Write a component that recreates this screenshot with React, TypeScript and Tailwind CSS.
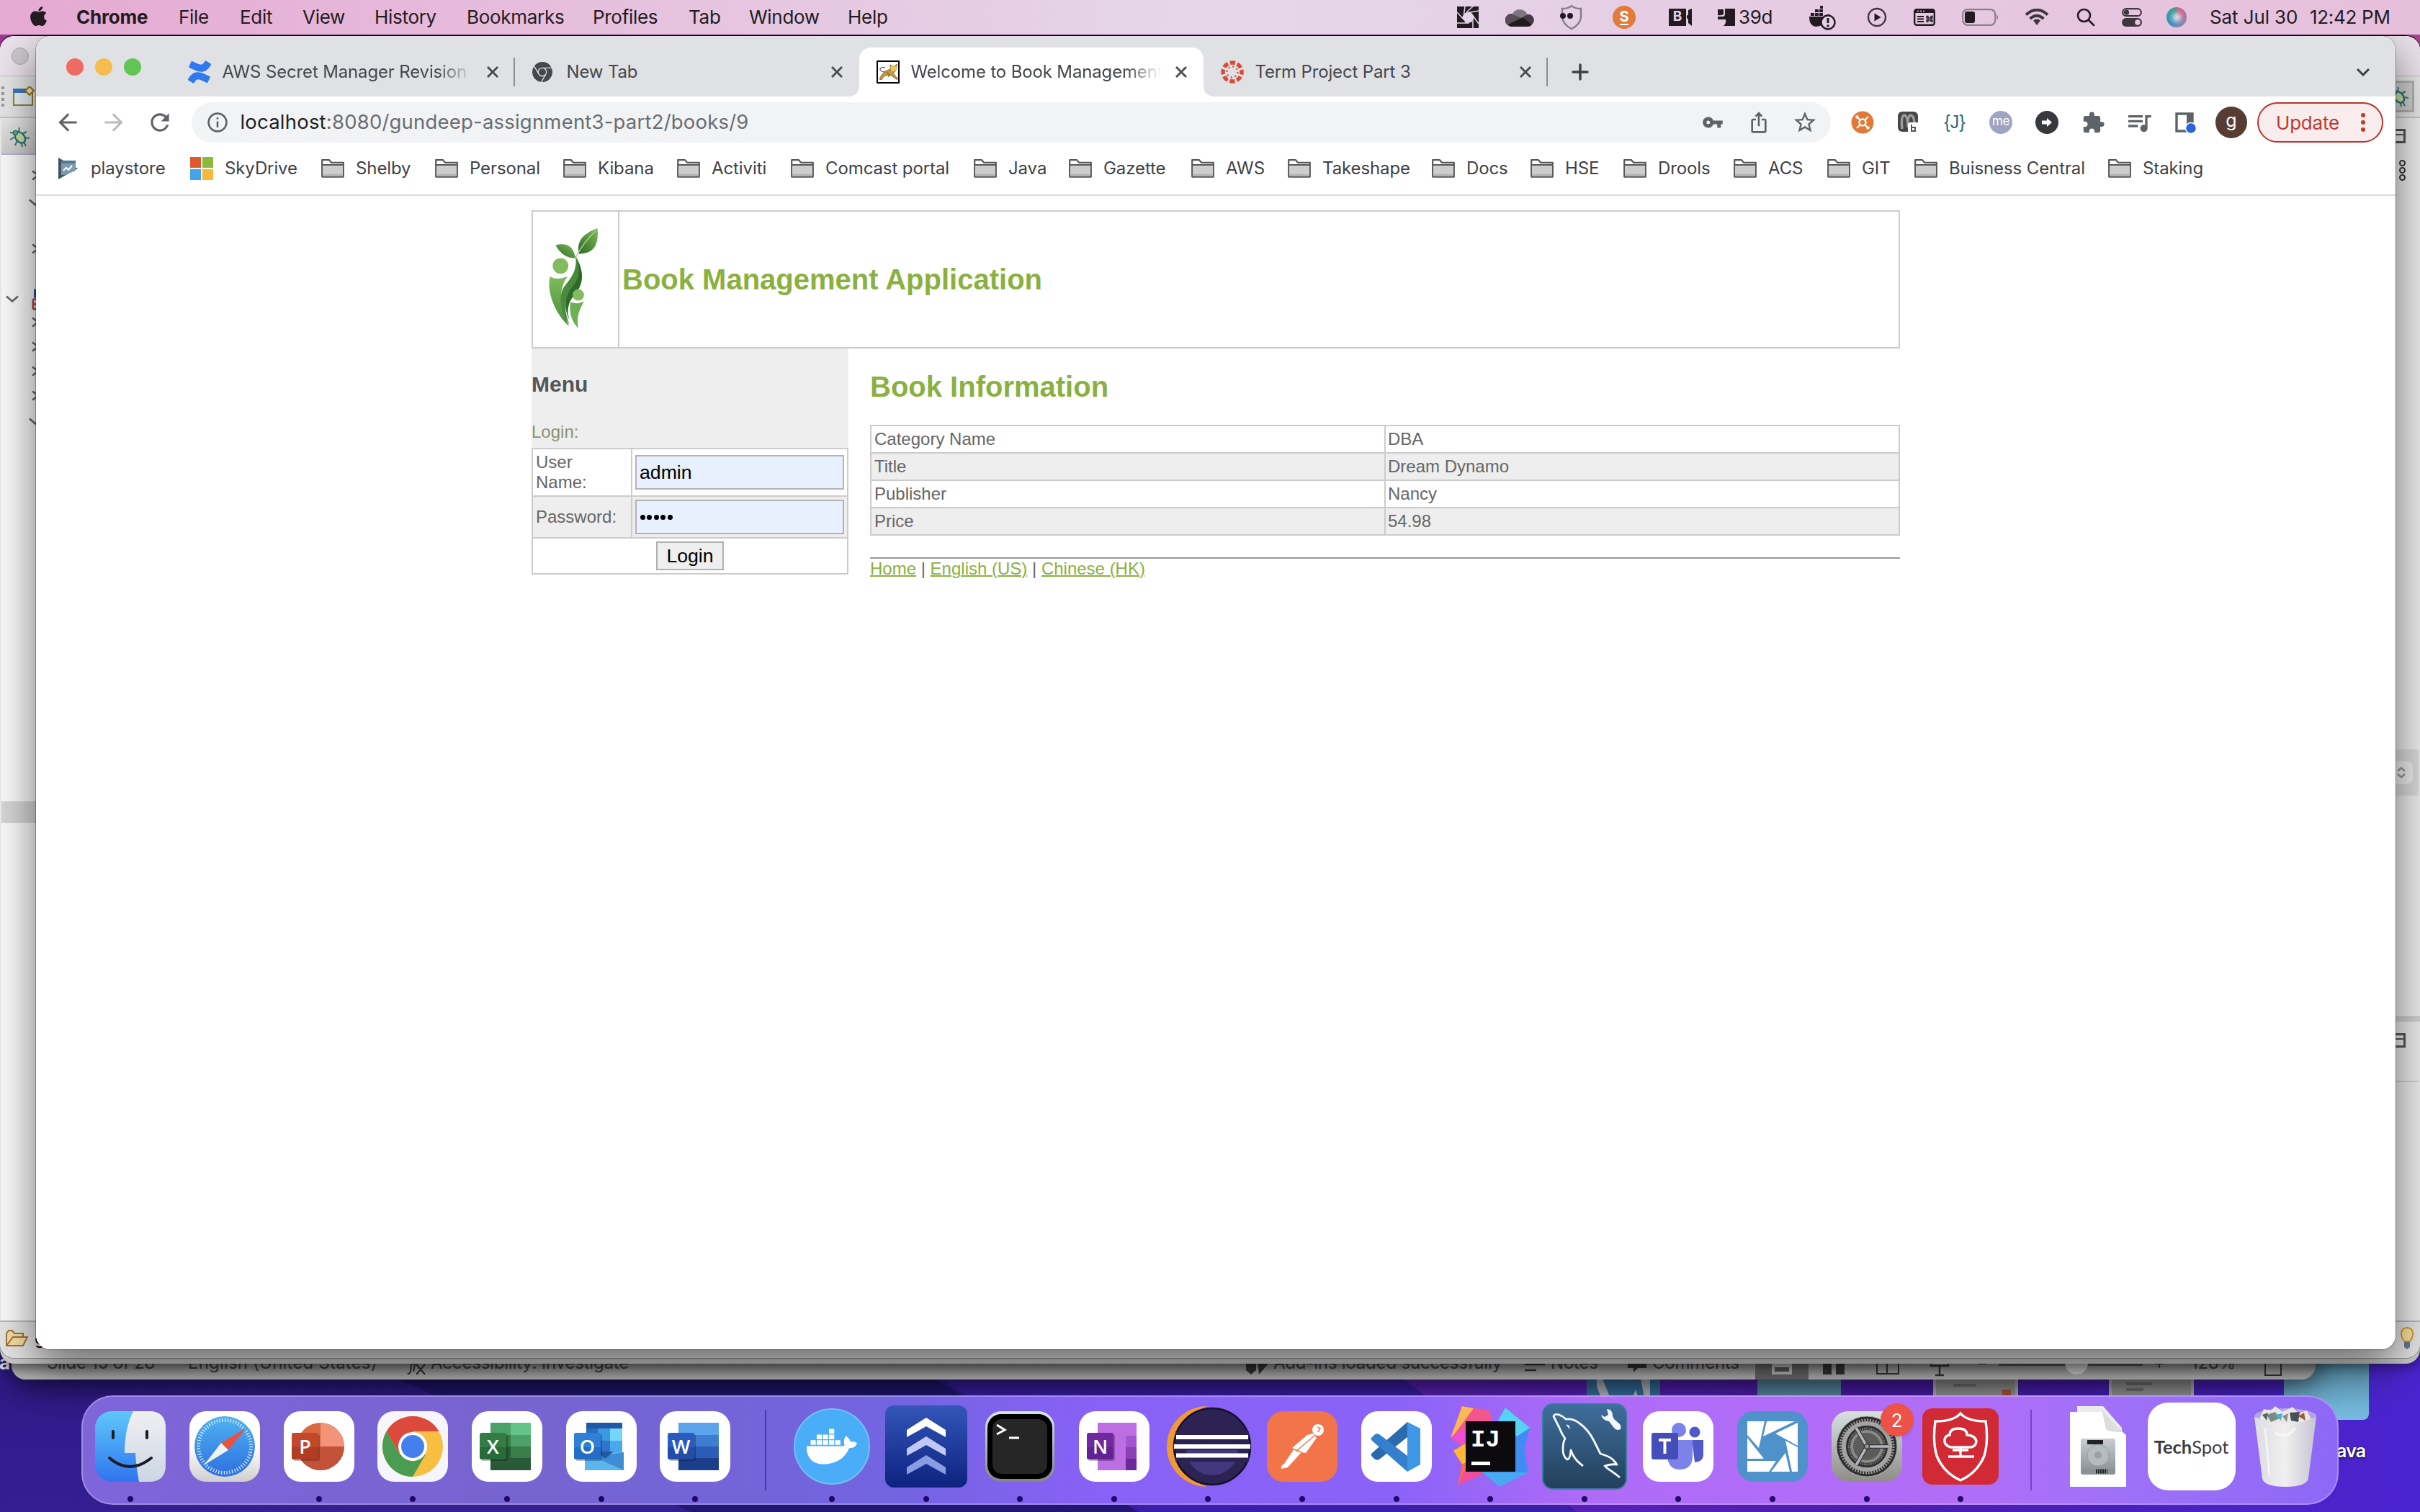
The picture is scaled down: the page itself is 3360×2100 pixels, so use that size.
import React from "react";
import { FaApple, FaDocker } from "react-icons/fa";
import { SiConfluence, SiGooglechrome } from "react-icons/si";
import { MdArrowBack, MdArrowForward, MdRefresh, MdVpnKey, MdIosShare, MdStarBorder, MdExtension, MdQueueMusic } from "react-icons/md";

type Kids = { children?: React.ReactNode };

/* ---------- desktop ---------- */

function Wallpaper() {
  return (
    <svg className="absolute left-0 top-0 h-[2100px] w-[3360px]" viewBox="0 0 3360 2100">
      <defs>
        <linearGradient id="wl" x1="0" x2="0" y1="0" y2="1">
          <stop offset="0" stopColor="#a03a98" />
          <stop offset="0.9" stopColor="#2f1b88" />
          <stop offset="1" stopColor="#331e92" />
        </linearGradient>
        <linearGradient id="wr" x1="0" x2="1">
          <stop offset="0" stopColor="#5f22bc" />
          <stop offset="0.5" stopColor="#4a1dae" />
          <stop offset="1" stopColor="#4a24d0" />
        </linearGradient>
      </defs>
      <rect width="3360" height="2100" fill="url(#wl)" />
      <path d="M520 1900L960 2100H1600L1240 1880Z" fill="#211672" />
      <path d="M1240 1870L1580 2100H2200L1890 1870Z" fill="#3a1ea6" />
      <path d="M1890 1870L2190 2100H3360V1870Z" fill="url(#wr)" />
      <rect x="3200" width="160" height="100" fill="#a8478c" />
    </svg>
  );
}

function DesktopItems() {
  return (
    <>
      <div className="absolute left-[2203px] top-[1900px] h-[60px] w-[102px] bg-[#386f9f]">
        <svg viewBox="0 0 102 60" className="h-full w-full">
          <path d="M14 10H20L40 60H28L14 26ZM74 10H88V60H84ZM68 30L78 60H56Z" fill="#b4bcc4" />
        </svg>
      </div>
      <div className="absolute left-[2440px] top-[1900px] h-[60px] w-[116px] bg-[#5a8ca8]" />
      <div className="absolute left-[2684px] top-[1900px] h-[60px] w-[118px] border-x-4 border-[#b5b5b5] bg-[#999]">
        <div className="mt-[22px] ml-6 h-1 w-8 bg-[#777]" />
        <div className="mt-1 ml-[92px] h-2 w-3 bg-[#b0563a]" />
      </div>
      <div className="absolute left-[2928px] top-[1900px] h-[60px] w-[118px] border-x-4 border-[#b5b5b5] bg-[#999]">
        <div className="mt-[20px] ml-5 h-1 w-9 bg-[#777]" />
        <div className="mt-1 ml-5 h-1 w-6 bg-[#777]" />
      </div>
      <div className="absolute left-[3171px] top-[1880px] h-[92px] w-[118px] rounded-b-lg bg-linear-to-b from-[#5c93ae] to-[#77bce0]" />
      <span className="absolute left-[3244px] top-[1998px] font-['Inter'] text-[25px]/[34px] font-semibold tracking-[-0.8px] text-white [text-shadow:0_1px_3px_#000]">ava</span>
      <span className="absolute left-[-1px] top-[1876px] font-['Inter'] text-[26px]/[34px] font-bold text-white">a</span>
    </>
  );
}

/* ---------- menu bar ---------- */

const MENUS: [string, string][] = [
  ["File", "w-[85px]"],
  ["Edit", "w-[87px]"],
  ["View", "w-[100px]"],
  ["History", "w-[128px]"],
  ["Bookmarks", "w-[175px]"],
  ["Profiles", "w-[133px]"],
  ["Tab", "w-[84px]"],
  ["Window", "w-[137px]"],
  ["Help", "w-[80px]"],
];

function Slot({ w, children }: Kids & { w: string }) {
  return <div className={`flex h-full shrink-0 items-center justify-center ${w}`}>{children}</div>;
}

function MenuBar() {
  return (
    <header className="absolute inset-x-0 top-0 flex h-12 items-center whitespace-nowrap bg-linear-to-r from-[#e5a9d2] via-[#e5d7e9] to-[#e6bfdb] pb-px font-['Inter'] text-[26px] tracking-[-0.3px] text-[#231a22]">
      <FaApple className="mb-0.5 ml-[38px] size-[31px]" />
      <span className="ml-[37px] w-[142px] font-bold tracking-[-0.2px]">Chrome</span>
      {MENUS.map(([t, w]) => (
        <span key={t} className={`${w} shrink-0`}>{t}</span>
      ))}
      <div className="ml-auto flex h-full w-[1358px] items-center">
        <Slot w="w-[72px]">
          <svg viewBox="0 0 30 30" className="size-[30px]">
            <rect width="30" height="30" fill="#231a22" />
            <path d="M11 9L19 8L24 15L20 22L12 23L7 15Z" fill="#e5d7e9" />
            <path d="M11 0L9 15M30 6L13 9M22 30L22 18M0 23H17M0 8L9 18M30 24L20 10M22 0L13 8" stroke="#e5d7e9" strokeWidth="1.5" />
          </svg>
        </Slot>
        <Slot w="w-[72px]">
          <svg viewBox="0 0 40 26" className="h-[26px] w-10">
            <path d="M10 8A11 10 0 0 1 30 8L36 14L20 16Z" fill="#7f7480" />
            <path d="M3 24A9 9 0 0 1 9 8L26 16L8 26Z" fill="#574e58" />
            <path d="M24 13L31 9A8 8 0 0 1 37 23L31 26Z" fill="#443b45" />
            <path d="M4 23L24 13L37 23Q35 26 31 26H9Q5 26 4 23Z" fill="#231a22" />
          </svg>
        </Slot>
        <Slot w="w-[72px]">
          <svg viewBox="0 0 32 36" className="h-9 w-8" fill="none">
            <path d="M16 2Q20 6 29 6V18Q28 28 16 34Q4 28 3 18V6Q12 6 16 2Z" stroke="#857b86" strokeWidth="2.4" />
            <circle cx="4" cy="16" r="4" fill="#231a22" />
            <circle cx="14" cy="16" r="4" fill="#231a22" />
          </svg>
        </Slot>
        <Slot w="w-[74px]">
          <div className="flex size-8 items-center justify-center rounded-full bg-[#e27a39]">
            <span className="border-b-2 border-white text-[20px]/[20px] font-bold text-white">S</span>
          </div>
        </Slot>
        <Slot w="w-[82px]">
          <div className="flex h-6 w-6 items-center justify-center bg-[#231a22] text-[19px] font-bold text-[#e6d0e4]">B</div>
          <svg viewBox="0 0 8 24" className="h-6 w-2"><path d="M1 10L3 8V2L8 0V24L3 20V15L1 13Z" fill="#231a22" /></svg>
        </Slot>
        <div className="flex h-full w-[118px] shrink-0 items-center gap-[5px] pl-[11px]">
          <svg viewBox="0 0 24 24" className="size-6"><path d="M0 1H8V8Q4 10 0 9ZM10 0H24V24H8Q12 21 11 15H0V11H7Q10 11 10 7Z" fill="#231a22" /></svg>
          <span>39d</span>
        </div>
        <Slot w="w-[76px]">
          <svg viewBox="0 -2 38 36" className="h-9 w-[38px] translate-y-[2px]">
            <path d="M1 13H24Q26 9 29 10L31 13Q24 26 10 27Q1 26 1 13ZM3 8H8V12H3ZM9 8H14V12H9ZM15 8H20V12H15ZM9 3H14V7H9ZM15 3H20V7H15ZM16 -2H20V2H16Z" fill="#231a22" />
            <circle cx="27" cy="21" r="9.500" fill="#e6d0e4" stroke="#231a22" strokeWidth="2.400" />
            <path d="M27 15V22M27 24.500V27.500" stroke="#231a22" strokeWidth="3" />
          </svg>
        </Slot>
        <Slot w="w-[76px]">
          <svg viewBox="0 0 28 28" className="size-7" fill="none"><circle cx="14" cy="14" r="12" stroke="#3f353e" strokeWidth="2.4" /><path d="M10.5 8.5L19.500 14L10.500 19.500Z" fill="#231a22" /></svg>
        </Slot>
        <Slot w="w-[56px]">
          <svg viewBox="0 0 30 24" className="h-6 w-[30px]" fill="none">
            <rect x="1.200" y="1.200" width="27.600" height="21.600" rx="3" stroke="#231a22" strokeWidth="2.400" />
            <path d="M2 4H28" stroke="#231a22" strokeWidth="4" />
            <path d="M5 3.500H7M9 3.500H11M13 3.500H15" stroke="#e6c8e0" strokeWidth="1.500" />
            <path d="M5 11H14M5 14.500H14M5 18H14" stroke="#231a22" strokeWidth="1.800" />
            <path d="M18 10.500H20V18H18V16H26V18H24V10.500H26V13H18Z" stroke="#231a22" strokeWidth="1.300" />
          </svg>
        </Slot>
        <Slot w="w-[100px]">
          <svg viewBox="0 0 52 24" className="h-6 w-[52px]" fill="none">
            <rect x="1.200" y="1.200" width="45" height="21.600" rx="6.500" stroke="#8f7f8c" strokeWidth="2.200" />
            <rect x="4" y="4" width="14" height="16" rx="3" fill="#231a22" />
            <path d="M48.500 8Q52 12 48.500 16Z" fill="#8f7f8c" />
          </svg>
        </Slot>
        <Slot w="w-[56px]">
          <svg viewBox="0 0 34 24" className="h-6 w-[34px]" fill="none" stroke="#3f353e" strokeWidth="3.800">
            <path d="M2 8.500Q17 -5 32 8.500" /><path d="M7.500 14Q17 5.500 26.500 14" /><path d="M12 16.500Q17 12.500 22 16.500L17 23Z" fill="#3f353e" stroke="none" />
          </svg>
        </Slot>
        <Slot w="w-[80px]">
          <svg viewBox="0 0 26 26" className="size-[26px]" fill="none" stroke="#231a22" strokeWidth="2.600" strokeLinecap="round"><circle cx="10.500" cy="10.500" r="8.500" /><path d="M17 17L24 24" /></svg>
        </Slot>
        <Slot w="w-[48px]">
          <svg viewBox="0 0 28 26" className="h-[26px] w-7" fill="none">
            <rect x="1.200" y="1.200" width="25.600" height="10" rx="5" stroke="#3f353e" strokeWidth="2.200" /><circle cx="6.500" cy="6.200" r="3.600" fill="#3f353e" />
            <rect y="14" width="28" height="12" rx="6" fill="#3f353e" /><circle cx="22" cy="20" r="3.800" fill="#e6c4de" />
          </svg>
        </Slot>
        <Slot w="w-[76px]">
          <div className="flex size-7 items-center justify-center rounded-full bg-conic from-[#d95a8a] via-[#3c8fc0] via-60% to-[#3fa08a]">
            <div className="size-3 rounded-full bg-white/80 blur-[3px]" />
          </div>
        </Slot>
        <span className="ml-2 w-[139px] shrink-0 tracking-[-0.100px]">Sat Jul 30</span>
        <span className="tracking-0">12:42 PM</span>
      </div>
    </header>
  );
}

/* ---------- background windows ---------- */

function Bug() {
  return (
    <svg viewBox="0 0 30 30" className="size-[30px]" fill="none">
      <path d="M8 10L2 9M9 15L2 19M12 20L9 27M14 8L15 2M19 11L25 8M22 16L29 17M21 22L24 28M17 21L19 29" stroke="#3f7a68" strokeWidth="2" />
      <ellipse cx="16" cy="16" rx="6" ry="8.500" transform="rotate(-40 16 16)" fill="#c8dfa0" stroke="#2c7084" strokeWidth="2.400" />
      <circle cx="9.500" cy="9.500" r="3" fill="#7fae6a" stroke="#2c7084" strokeWidth="1.500" />
    </svg>
  );
}

function EclipseWindow() {
  return (
    <>
      <div className="absolute left-[16px] top-[100px] h-[1816px] w-[3199px] overflow-hidden rounded-[20px] bg-[#aaa] shadow-[0_10px_40px_rgba(0,0,0,0.6)]">
        <div className="mt-[1768px] flex h-12 items-center whitespace-nowrap bg-linear-to-b from-[#8a8a8a] from-50% to-[#b4b4b4] pt-0.5 font-['Inter'] text-[24px] tracking-[-0.2px] text-[#3a3a3a]">
          <span className="ml-[49px] w-[196px] shrink-0">Slide 15 of 28</span>
          <span className="w-[303px] shrink-0 tracking-[0.200px]">English (United States)</span>
          <svg viewBox="0 0 30 24" className="mr-1 h-6 w-[30px] translate-y-1.5" fill="none" stroke="#333" strokeWidth="2"><path d="M2 20Q6 24 7 10Q8 2 12 8L10 18M14 8L26 22M26 8L14 22" /></svg>
          <span className="w-[1132px] shrink-0">Accessibility: Investigate</span>
          <svg viewBox="0 0 30 20" className="mr-2 h-5 w-[30px] translate-y-1.5" fill="#333"><path d="M0 0H14V14L7 20L0 14ZM16 0H30V6L18 20Z" /></svg>
          <span className="w-[349px] shrink-0">Add-ins loaded successfully</span>
          <svg viewBox="0 0 28 12" className="mr-2 h-3 w-7 translate-y-1.5" stroke="#333" strokeWidth="2.500"><path d="M0 2H28M0 10H16" /></svg>
          <span className="w-[107px] shrink-0">Notes</span>
          <svg viewBox="0 0 26 18" className="mr-2 h-[22px] w-[26px] translate-y-1" fill="#333"><path d="M0 0H26V12H14L8 18V12H0Z" /></svg>
          <span className="w-[143px] shrink-0">Comments</span>
          <div className="flex h-14 w-[74px] shrink-0 items-center justify-center bg-[#666]">
            <div className="flex h-8 w-7 flex-col justify-end gap-1.5 bg-[#bbb] p-1"><i className="h-1 bg-[#555]" /><i className="h-1.5 bg-[#555]" /></div>
          </div>
          <div className="ml-5 flex w-[74px] shrink-0 translate-y-1.5 gap-1.5"><i className="h-5 w-3 bg-[#333]" /><i className="h-5 w-3 bg-[#333]" /></div>
          <div className="flex w-[75px] shrink-0 translate-y-1"><i className="h-6 w-4 border-2 border-[#333]" /><i className="h-6 w-4 border-2 border-l-0 border-[#333]" /></div>
          <svg viewBox="0 0 26 30" className="h-[30px] w-[26px] translate-y-1" fill="none" stroke="#333" strokeWidth="2.500"><path d="M1 0V15H25V0M13 15V28M7 28H19" /></svg>
          <span className="ml-[38px] w-[31px] shrink-0">−</span>
          <div className="flex h-2 w-[200px] shrink-0 items-center bg-[#555]"><i className="ml-[92px] size-8 rounded-full bg-[#ccc]" /></div>
          <span className="ml-[15px] w-[52px] shrink-0">+</span>
          <span className="w-[102px] shrink-0">128%</span>
          <i className="h-6 w-6 translate-y-1.5 border-2 border-[#333]" />
        </div>
      </div>
      <div className="absolute left-0 top-[60px] h-[1834px] w-[3360px] rounded-[20px] bg-[#c9c9c9] shadow-[0_4px_16px_rgba(0,0,0,0.4)]" />
      <div className="absolute left-0 top-[49px] flex h-[1837px] w-[3360px] flex-col overflow-hidden rounded-[20px] border-t border-black bg-[#ececec] shadow-[0_0_0_1px_rgba(0,0,0,0.3)]">
        <div className="flex h-14 shrink-0 items-center border-b border-[#c2bdc2] bg-[#ebe3eb] pl-4">
          <i className="size-6 rounded-full border border-[#aaa6aa] bg-[#cdc8ce]" />
        </div>
        <div className="flex h-14 shrink-0 items-center justify-between bg-[#e6e6e6] pl-0.5">
          <div className="flex items-center gap-3">
            <div className="flex flex-col gap-1"><i className="size-1 bg-[#999]" /><i className="size-1 bg-[#999]" /><i className="size-1 bg-[#999]" /><i className="size-1 bg-[#999]" /></div>
            <svg viewBox="0 0 30 28" className="h-7 w-[30px]" fill="none">
              <rect x="1" y="5" width="26" height="21" fill="#e8f1f8" stroke="#9c7d3d" strokeWidth="2" /><rect y="3" width="22" height="6" fill="#3a7cba" />
              <path d="M23 0L29 6L23 12L17 6Z" fill="#f6e9b0" stroke="#9c7520" strokeWidth="2" />
            </svg>
          </div>
          <div className="mr-2 flex h-11 w-[50px] items-center justify-end border-3 border-[#b0b0b0] bg-[#cfcfcf] pr-1"><Bug /></div>
        </div>
        <div className="flex min-h-0 flex-1 justify-between border-t-2 border-[#c4c4c4]">
          <div className="ml-0.5 flex w-[60px] flex-col">
            <div className="flex h-[51px] shrink-0 items-center border-b-2 border-[#b2b6d2] bg-linear-to-b from-[#e8e8e8] to-[#cdcdcd] pt-0.5 pl-2.5"><Bug /></div>
            <svg viewBox="0 0 60 897" className="h-[898px] w-[60px] shrink-0 bg-[#fafafa]" fill="none" stroke="#666" strokeWidth="2.600">
              <path d="M43 22L51 28L43 34M39 62L47 69L55 62M43 124L51 130L43 136M7 196L15 203L23 196M43 226L51 232L43 238M43 260L51 266L43 272M43 294L51 300L43 306M43 328L51 334L43 340M39 366L47 373L55 366" />
              <path d="M44 200H60M44 214H60M44 200V214M44 207H60" stroke="#b03a40" /><rect x="45" y="186" width="10" height="12" fill="#2e5a8c" stroke="none" />
            </svg>
            <div className="h-[30px] shrink-0 bg-[#d6d6d6]" />
            <div className="flex-1 bg-[#fafafa]" />
          </div>
          <div className="flex w-[50px] flex-col items-start pt-[15px]">
            <div className="h-5 w-[30px] shrink-0 border-3 border-[#555] pt-1"><div className="border-t-2 border-[#555]" /></div>
            <div className="mt-[23px] ml-[21px] flex flex-col gap-px"><i className="size-[9px] rounded-full border-2 border-[#333]" /><i className="size-[9px] rounded-full border-2 border-[#333]" /><i className="size-[9px] rounded-full border-2 border-[#333]" /></div>
            <div className="mt-[790px] flex h-16 w-12 shrink-0 items-center bg-[#d9d9d9]">
              <div className="flex h-8 w-10 items-center justify-end rounded-lg bg-[#ececec] pr-2.5">
                <svg viewBox="0 0 12 16" className="h-4 w-3" fill="none" stroke="#999" strokeWidth="2.600"><path d="M1 6L6 1.500L11 6M1 10L6 14.500L11 10" /></svg>
              </div>
            </div>
            <div className="mt-[306px] h-2 w-[50px] bg-[#d0d0d0]" />
            <div className="mt-[16px] h-5 w-[30px] border-3 border-[#555] pt-1"><div className="border-t-2 border-[#555]" /></div>
            <div className="mt-[46px] h-0.5 w-12 bg-[#d0d0d0]" />
          </div>
        </div>
        <div className="flex h-[52px] shrink-0 items-center justify-between border-t-2 border-[#bbb] bg-[#e4e4e4] px-2">
          <svg viewBox="0 0 32 24" className="h-6 w-8 -translate-y-0.5" fill="#f4dfa0" stroke="#a2703a" strokeWidth="2"><path d="M1 22V5L4 1H9L12 5H24V10" /><path d="M1 22L10 10H30L24 22Z" /></svg>
          <span className="-mt-1 mr-auto ml-2 font-['Inter'] text-[24px] text-black">g</span>
          <svg viewBox="0 0 20 32" className="h-8 w-5 -translate-y-0.5"><path d="M10 1C20 2 20 12 14 20H6C0 12 0 2 10 1Z" fill="#f8e4a0" stroke="#d79a35" strokeWidth="2" /><path d="M6 21H14V28L10 31L6 28Z" fill="#6a7c90" /></svg>
        </div>
      </div>
    </>
  );
}

/* ---------- browser chrome ---------- */

function CloseX() {
  return (
    <div className="flex w-12 shrink-0 justify-center">
      <svg viewBox="0 0 16 16" className="size-4" stroke="#45494d" strokeWidth="2.800"><path d="M1 1L15 15M15 1L1 15" /></svg>
    </div>
  );
}

function Tab({ icon, title, active, bar, fade }: { icon: React.ReactNode; title: string; active?: boolean; bar?: boolean; fade?: boolean }) {
  return (
    <div className={`relative flex h-[68px] w-[478px] shrink-0 items-center pl-6 ${active ? "rounded-t-2xl bg-white" : ""}`}>
      {active && (
        <>
          <svg viewBox="0 0 16 16" className="absolute bottom-0 -left-4 size-4"><path d="M16 0V16H0Q16 16 16 0Z" fill="#fff" /></svg>
          <svg viewBox="0 0 16 16" className="absolute -right-4 bottom-0 size-4"><path d="M0 0V16H16Q0 16 0 0Z" fill="#fff" /></svg>
        </>
      )}
      <div className="mr-4 flex size-8 shrink-0 items-center">{icon}</div>
      <span className={`w-[351px] whitespace-nowrap text-[24px] tracking-[-0.150px] text-[#43474b] ${fade ? "mask-r-from-85% mask-r-to-99%" : ""}`}>{title}</span>
      <CloseX />
      {bar && <div className="absolute right-0 h-10 w-0.5 bg-[#8a8d91]" />}
    </div>
  );
}

const TomcatIcon = (
  <svg viewBox="0 0 32 32" className="size-8">
    <rect x="1" y="1" width="30" height="30" fill="#fff" stroke="#000" strokeWidth="2" />
    <path d="M4 26L7 20L12 15L19 12V6L22 8H25L28 5V11L26 15L23 17L25 20L30 26H27L21 21L16 20L10 22L7 27Z" fill="#c99a3c" stroke="#6a5630" strokeWidth="0.800" />
    <path d="M19 9L22 8H25L28 8V12L25 15H21Z" fill="#e8c860" />
    <path d="M12 16Q4 16 5 11Q8 8 12 10M14 17Q20 19 16 23" fill="none" stroke="#333" strokeWidth="1" />
  </svg>
);

const CanvasIcon = (
  <svg viewBox="0 0 32 32" className="size-8" fill="none">
    <circle cx="16" cy="16" r="13" stroke="#dc4a38" strokeWidth="5.500" strokeDasharray="7.200 3.010" strokeDashoffset="3.600" />
    <circle cx="16" cy="16" r="7.500" stroke="#dc4a38" strokeWidth="2.200" strokeDasharray="2.200 3.690" />
  </svg>
);

function TabStrip() {
  return (
    <div className="flex h-[84px] shrink-0 items-end bg-[#dfe1e5]">
      <div className="flex h-full w-[186.500px] shrink-0 items-start gap-4 pt-[31px] pl-[42px]">
        <i className="size-6 rounded-full bg-[#ed6b60]" /><i className="size-6 rounded-full bg-[#f5be4f]" /><i className="size-6 rounded-full bg-[#62c554]" />
      </div>
      <Tab icon={<SiConfluence className="size-8 text-[#2f78ee]" />} title="AWS Secret Manager Revision" bar fade />
      <Tab icon={<SiGooglechrome className="size-7 text-[#45494d]" />} title="New Tab" />
      <Tab icon={TomcatIcon} title="Welcome to Book Management" active fade />
      <Tab icon={CanvasIcon} title="Term Project Part 3" bar />
      <svg viewBox="0 0 24 24" className="mb-[22px] ml-[33px] size-6" stroke="#3c4043" strokeWidth="3.400" strokeLinecap="round"><path d="M12 2V22M2 12H22" /></svg>
      <svg viewBox="0 0 18 12" className="mr-9 mb-[28px] ml-auto h-3 w-[18px]" fill="none" stroke="#3c4043" strokeWidth="3"><path d="M1 2L9 10L17 2" /></svg>
    </div>
  );
}

function S64({ children }: Kids) {
  return <div className="flex w-16 shrink-0 items-center justify-center">{children}</div>;
}

function Toolbar() {
  return (
    <div className="flex h-[72px] shrink-0 items-center bg-white pl-3 text-[#5f6368]">
      <S64><MdArrowBack className="size-[38px]" /></S64>
      <S64><MdArrowForward className="size-[38px] text-[#babcbe]" /></S64>
      <S64><MdRefresh className="size-[38px]" /></S64>
      <div className="ml-3 flex h-14 w-[2276px] shrink-0 items-center rounded-full bg-[#f1f3f4] pr-1 pl-[22px]">
        <svg viewBox="0 0 28 28" className="size-7" fill="none" stroke="#5f6368" strokeWidth="2.600"><circle cx="14" cy="14" r="12.400" /><path d="M14 12.500V21M14 7V9.800" /></svg>
        <span className="ml-[17.500px] text-[27.500px] tracking-[0.200px] text-[#6a6d71]"><span className="text-[#202124]">localhost</span>:8080/gundeep-assignment3-part2/books/9</span>
        <div className="ml-auto flex">
          <S64><MdVpnKey className="size-[30px]" /></S64>
          <S64><MdIosShare className="size-8" /></S64>
          <S64><MdStarBorder className="size-9" /></S64>
        </div>
      </div>
      <div className="ml-3 flex items-center">
        <S64>
          <svg viewBox="0 0 32 32" className="size-8"><circle cx="16" cy="16" r="15.500" fill="#e27936" /><path d="M8 8L13 13M24 8L19 13M8 24L13 19M24 24L19 19" stroke="#fff" strokeWidth="2.200" /><circle cx="16" cy="16" r="4.500" fill="none" stroke="#fff" strokeWidth="2.400" /><circle cx="8.500" cy="8.500" r="2.200" fill="#fff" /><circle cx="23.500" cy="23.500" r="2.200" fill="#fff" /></svg>
        </S64>
        <S64>
          <svg viewBox="0 0 30 30" className="size-[30px]"><rect width="28" height="28" rx="6" fill="#474747" /><path d="M6 24Q4 6 9 5Q14 6 14 22Q13 6 18 5Q23 6 23 18" fill="none" stroke="#9b9b9b" strokeWidth="3.500" /><rect x="14" y="15" width="16" height="15" rx="3" fill="#fff" /><path d="M19 18V27H24V22H19" fill="none" stroke="#555" strokeWidth="2" /></svg>
        </S64>
        <S64><span className="font-['Liberation_Sans'] text-[25px] text-[#2f6b74]">{"{J}"}</span></S64>
        <S64><span className="flex size-8 items-center justify-center rounded-full bg-[#9fa4c0] pb-0.5 text-[17px] tracking-tight text-white">me</span></S64>
        <S64>
          <svg viewBox="0 0 32 32" className="size-8"><circle cx="16" cy="16" r="16" fill="#37393c" /><path d="M9 13.500H16V10L23 16L16 22V18.500H9Z" fill="#fff" /></svg>
        </S64>
        <S64><MdExtension className="size-[33px]" /></S64>
        <S64><MdQueueMusic className="size-10" /></S64>
        <S64>
          <svg viewBox="0 0 30 30" className="size-[30px]" fill="none"><path d="M3 3H25V27H3Z" stroke="#5f6368" strokeWidth="3.400" /><rect x="17" y="3" width="8" height="24" fill="#5f6368" /><circle cx="23" cy="23" r="7.500" fill="#2b66d9" stroke="#fff" strokeWidth="1.500" /></svg>
        </S64>
        <S64><span className="flex size-11 items-center justify-center rounded-full bg-[#563c33] pb-1 text-[25px] text-white">g</span></S64>
      </div>
      <div className="ml-1 flex h-14 w-[175px] shrink-0 items-center justify-between rounded-full border-2 border-[#b8352b] bg-[#f8ecec] pr-[23px] pl-6 text-[26px] tracking-[-0.200px] text-[#bb3a30]">
        <span>Update</span>
        <span className="flex flex-col gap-1"><i className="size-1.5 rounded-full bg-[#c5392b]" /><i className="size-1.5 rounded-full bg-[#c5392b]" /><i className="size-1.5 rounded-full bg-[#c5392b]" /></span>
      </div>
    </div>
  );
}

function Folder() {
  return (
    <svg viewBox="0 0 32 26" className="h-[26px] w-8" fill="none">
      <path d="M1.200 24.600V1.200H11L14 4.800H30.800V24.600Z" fill="#fff" stroke="#555759" strokeWidth="2.200" strokeLinejoin="round" />
      <rect x="2.300" y="9" width="27.400" height="12" fill="#cdcdcd" /><rect x="2.300" y="21" width="27.400" height="3" fill="#b3b3b3" />
      <path d="M1.200 8H30.800" stroke="#555759" strokeWidth="2" />
    </svg>
  );
}

const FOLDERS: [string, string][] = [
  ["Shelby", "w-[158px]"],
  ["Personal", "w-[178px]"],
  ["Kibana", "w-[158px]"],
  ["Activiti", "w-[158px]"],
  ["Comcast portal", "w-[254px]"],
  ["Java", "w-[132px]"],
  ["Gazette", "w-[170px]"],
  ["AWS", "w-[134px]"],
  ["Takeshape", "w-[200px]"],
  ["Docs", "w-[137px]"],
  ["HSE", "w-[129px]"],
  ["Drools", "w-[153px]"],
  ["ACS", "w-[130px]"],
  ["GIT", "w-[121px]"],
  ["Buisness Central", "w-[269px]"],
  ["Staking", "w-[160px]"],
];

function Bookmarks() {
  return (
    <div className="flex h-[66px] shrink-0 items-center border-b-2 border-[#dadada] bg-white pb-2 pl-[30px] text-[24px] tracking-[-0.100px] whitespace-nowrap text-[#3f4246]">
      <div className="flex w-[184px] shrink-0 items-center gap-[18px]">
        <svg viewBox="0 0 28 30" className="h-[30px] w-7"><path d="M1 0L28 15L1 30Z" fill="#44545e" /><path d="M5 4H25V18L10 24H5Z" fill="#7b9bae" /><path d="M5 4H25V8H5Z" fill="#54788c" /><path d="M8 18L12 14L15 17L20 11" fill="none" stroke="#fff" strokeWidth="2" /></svg>
        <span>playstore</span>
      </div>
      <div className="flex w-[182px] shrink-0 items-center gap-4">
        <div className="grid size-8 grid-cols-2 gap-0.5"><i className="bg-[#e0592f]" /><i className="bg-[#8cb93a]" /><i className="bg-[#45a3e9]" /><i className="bg-[#f6b93c]" /></div>
        <span>SkyDrive</span>
      </div>
      {FOLDERS.map(([t, w]) => (
        <div key={t} className={`flex shrink-0 items-center gap-4 ${w}`}><Folder /><span>{t}</span></div>
      ))}
    </div>
  );
}

/* ---------- web page ---------- */

function LeafLogo() {
  return (
    <svg viewBox="0 0 70 144" className="-ml-1 h-[142px] w-[70px]">
      <defs>
        <linearGradient id="lf" x1="0" y1="1" x2="1" y2="0"><stop offset="0" stopColor="#2f6a28" /><stop offset="1" stopColor="#7fbb57" /></linearGradient>
        <linearGradient id="lb" x1="0" y1="0" x2="0" y2="1"><stop offset="0" stopColor="#7dbd5c" /><stop offset="1" stopColor="#4a8a3c" /></linearGradient>
      </defs>
      <path d="M68 2C70 24 64 38 42 38C38 22 46 10 68 2Z" fill="url(#lf)" />
      <path d="M9 26C24 22 34 26 37 44C24 44 16 38 9 26Z" fill="url(#lf)" />
      <path d="M66 5Q48 22 38 42" stroke="#a9d48a" strokeWidth="1.500" fill="none" />
      <circle cx="16" cy="55" r="11" fill="#82bb60" />
      <path d="M1 70C8 74 14 74 26 70C12 88 16 112 28 140C10 124 -4 94 1 70Z" fill="url(#lb)" />
      <path d="M37 40C50 70 40 78 28 92C20 106 22 122 29 138C14 118 14 98 20 86C32 70 40 62 37 40Z" fill="#4a8a3c" />
      <path d="M39 44C52 70 46 84 34 98C24 110 26 124 29 132C20 114 22 100 30 88C42 74 44 66 39 44Z" fill="#2f6a28" />
      <circle cx="41" cy="96" r="8" fill="#82bb60" />
      <path d="M30 106Q40 110 49 105C42 118 38 128 41 143C30 132 28 118 30 106Z" fill="#6db053" />
    </svg>
  );
}

const ROWS = [
  ["Category Name", "DBA"],
  ["Title", "Dream Dynamo"],
  ["Publisher", "Nancy"],
  ["Price", "54.98"],
];

function Page() {
  return (
    <main className="flex-1 bg-white pt-5 pl-[688px] font-['Liberation_Sans'] text-[24px]/[28px] text-[#666]">
      <div className="flex h-[192px] w-[1900px] border-2 border-[#ccc]">
        <div className="flex w-[120px] items-start justify-center border-r-2 border-[#ccc] pt-[21px]"><LeafLogo /></div>
        <h1 className="self-center pl-1 text-[40px]/[46px] font-bold text-[#8ab040]">Book Management Application</h1>
      </div>
      <div className="flex w-[1900px]">
        <aside className="h-[314px] w-[440px] bg-[#eee]">
          <h3 className="pt-[32px] pb-px text-[30px]/[36px] font-bold text-[#555]">Menu</h3>
          <p className="mt-[33px] mb-2 text-[#8a9274]">Login:</p>
          <div className="border-2 border-[#ccc] bg-white">
            <div className="flex h-16 items-center">
              <label className="w-[136px] pl-1">User<br />Name:</label>
              <div className="flex h-full w-[300px] items-center border-l-2 border-[#ccc] pl-1">
                <div className="flex h-12 w-[290px] items-center border-2 border-[#b3b3b3] bg-[#e8effd] pl-1 text-[26.670px] text-black">admin</div>
              </div>
            </div>
            <div className="flex h-[58px] items-center border-t-2 border-[#ccc] bg-[#eee]">
              <label className="w-[136px] pl-1">Password:</label>
              <div className="flex h-full w-[300px] items-center border-l-2 border-[#ccc] pl-1">
                <div className="flex h-12 w-[290px] items-center gap-[2.400px] border-2 border-[#b3b3b3] bg-[#e8effd] pl-[5px]">
                  <i className="size-[7px] rounded-full bg-black" /><i className="size-[7px] rounded-full bg-black" /><i className="size-[7px] rounded-full bg-black" /><i className="size-[7px] rounded-full bg-black" /><i className="size-[7px] rounded-full bg-black" />
                </div>
              </div>
            </div>
            <div className="flex h-[50px] items-center justify-center border-t-2 border-[#ccc]">
              <button className="h-10 w-[94px] border-2 border-[#b0b0b0] bg-[#efefef] text-[26.670px]/[32px] text-black">Login</button>
            </div>
          </div>
        </aside>
        <section className="ml-[30px] w-[1430px]">
          <h1 className="pt-[30px] text-[40px]/[46px] font-bold text-[#8ab040]">Book Information</h1>
          <div className="mt-[30px] border-2 border-b-0 border-[#ccc]">
            {ROWS.map(([k, v], i) => (
              <div key={k} className={`flex h-[38px] items-center border-b-2 border-[#ccc] ${i % 2 ? "bg-[#eee]" : ""}`}>
                <span className="h-full w-[712px] py-1 pl-1">{k}</span>
                <span className="h-full border-l-2 border-[#ccc] py-1 pl-[3px]">{v}</span>
              </div>
            ))}
          </div>
          <div className="mt-[30px] border-t-2 border-[#999] whitespace-pre [&_a]:text-[#8ab040] [&_a]:underline [&_a]:decoration-2">
            <a>Home</a> | <a>English (US)</a> | <a>Chinese (HK)</a>
          </div>
        </section>
      </div>
    </main>
  );
}

/* ---------- dock ---------- */

function Office({ letter, color, dark, children }: Kids & { letter: string; color: string; dark: string }) {
  return (
    <svg viewBox="0 0 98 98" className="size-[98px]">
      <rect width="98" height="98" rx="23" fill="#fff" />
      {children}
      <rect x="13" y="32" width="37" height="37" rx="3" fill="#000" opacity="0.250" />
      <rect x="11" y="30" width="37" height="37" rx="3" fill={color} />
      <rect x="11" y="50" width="37" height="17" rx="3" fill={dark} opacity="0.500" />
      <text x="29.500" y="58.500" textAnchor="middle" fontFamily="Open Sans" fontWeight="600" fontSize="27" fill="#fff">{letter}</text>
    </svg>
  );
}

const Finder = (
  <svg viewBox="0 0 98 98" className="size-[98px]">
    <defs><linearGradient id="fi" x1="0" x2="0" y1="0" y2="1"><stop offset="0" stopColor="#5ec8fa" /><stop offset="1" stopColor="#2f74f0" /></linearGradient>
      <linearGradient id="fj" x1="0" x2="0" y1="0" y2="1"><stop offset="0" stopColor="#f0f0f2" /><stop offset="1" stopColor="#ccd6e4" /></linearGradient></defs>
    <rect width="98" height="98" rx="23" fill="url(#fi)" />
    <path d="M53 0H75Q98 0 98 23V75Q98 98 75 98H61Q57 78 56 58H41Q41 24 53 0Z" fill="url(#fj)" />
    <path d="M25 28V37M72 28V37M20 65Q48 89 78 65" stroke="#1c1c22" strokeWidth="4" strokeLinecap="round" fill="none" />
  </svg>
);

const Safari = (
  <svg viewBox="0 0 98 98" className="size-[98px]">
    <defs><linearGradient id="sf" x1="0" x2="0" y1="0" y2="1"><stop offset="0" stopColor="#4fb2f0" /><stop offset="1" stopColor="#2e6fe0" /></linearGradient>
      <linearGradient id="sg" x1="0" x2="0" y1="0" y2="1"><stop offset="0.500" stopColor="#fff" /><stop offset="1" stopColor="#cfcfcf" /></linearGradient></defs>
    <rect width="98" height="98" rx="23" fill="url(#sg)" />
    <circle cx="49" cy="49" r="42" fill="url(#sf)" />
    <circle cx="49" cy="49" r="36.500" fill="none" stroke="#e6f2fd" strokeWidth="5" strokeDasharray="1.200 2.620" />
    <path d="M79 23L54 54L44 44Z" fill="#e9513f" /><path d="M20 75L44 44L54 54Z" fill="#f0f2f4" />
  </svg>
);

const Chrome = (
  <svg viewBox="0 0 98 98" className="size-[98px]">
    <rect width="98" height="98" rx="23" fill="#f6f5fb" />
    <circle cx="49" cy="49" r="42" fill="#f6bf41" />
    <path d="M49 7A42 42 0 0 1 85.400 28H49L30.800 59.500L12.600 28A42 42 0 0 1 49 7Z" fill="#dc4a3e" />
    <path d="M12.600 28L30.800 59.500L49 70L67.200 59.500L49 91A42 42 0 0 1 12.600 28Z" fill="#4a9c50" />
    <circle cx="49" cy="49" r="20" fill="#fff" /><circle cx="49" cy="49" r="16" fill="#4380ee" />
  </svg>
);

const Docker = (
  <div className="flex size-[106px] items-center justify-center rounded-full border-2 border-[#72c1fa] bg-[#49adf8]"><FaDocker className="size-[70px] text-white" /></div>
);

const Rocket = (
  <svg viewBox="0 0 114 114" className="size-[114px]">
    <defs><linearGradient id="rk" x1="0" x2="0" y1="0" y2="1"><stop offset="0" stopColor="#3356b8" /><stop offset="1" stopColor="#0d2280" /></linearGradient></defs>
    <rect width="114" height="114" rx="12" fill="url(#rk)" />
    <path d="M30 34L57 17L84 34V44L57 29L30 44Z" fill="#fff" />
    <path d="M30 60L57 43L84 60V70L57 55L30 70Z" fill="#c0c9f4" />
    <path d="M30 86L57 69L84 86V96L57 81L30 96Z" fill="#8a9ce2" />
  </svg>
);

const Terminal = (
  <svg viewBox="0 0 98 98" className="size-[98px]">
    <defs><linearGradient id="tm" x1="0" x2="0" y1="0" y2="1"><stop offset="0" stopColor="#d4e6f2" /><stop offset="1" stopColor="#858585" /></linearGradient></defs>
    <rect x="1" width="96" height="98" rx="22" fill="url(#tm)" /><rect x="4" y="4" width="90" height="90" rx="19" fill="#000" /><rect x="11" y="11" width="76" height="76" rx="13" fill="#262626" />
    <path d="M17 19L28 26L17 32M34 37H48" fill="none" stroke="#fff" strokeWidth="3" />
  </svg>
);

const EclipseIcon = (
  <svg viewBox="0 0 122 112" className="h-28 w-[122px]">
    <path d="M60 0A56 56 0 0 0 60 112A60 60 0 0 1 60 0Z" fill="#f09a35" />
    <circle cx="67" cy="56" r="53" fill="#2c2352" stroke="#15102e" strokeWidth="2.500" />
    <path d="M31 60A36 36 0 0 0 103 60Z" fill="#43377e" />
    <path d="M16 40H118M14 56H120M16 72H118" stroke="#2c2352" strokeWidth="10" />
    <path d="M17 43H117M14 56H120M17 68.500H117" stroke="#fff" strokeWidth="6" />
  </svg>
);

const Postman = (
  <svg viewBox="0 0 98 98" className="size-[98px]">
    <rect width="98" height="98" rx="23" fill="#f17548" />
    <circle cx="71" cy="26" r="8" fill="#fff" /><path d="M64 31L69 37L54 58L48 57L29 78L20 80V76L24 73L38 52L35 51L56 33Z" fill="#fff" />
    <path d="M66 34L40 56M48 57L38 53" stroke="#f17548" strokeWidth="1.500" /><path d="M70 22L74 24L71 29" fill="none" stroke="#f17548" strokeWidth="1.500" />
  </svg>
);

const VSCode = (
  <svg viewBox="0 0 98 98" className="size-[98px]">
    <rect width="98" height="98" rx="23" fill="#fff" />
    <path d="M64 15L82 24V74L64 84Z" fill="#3f97e8" />
    <path d="M64 15V36L25 67Q21 69 18 66L14 62Q13 60 15 58Z" fill="#2a6aae" />
    <path d="M64 84V62L25 32Q21 30 18 33L14 37Q13 39 15 41Z" fill="#3580cc" />
  </svg>
);

const IntelliJ = (
  <svg viewBox="0 0 110 112" className="h-28 w-[110px]">
    <path d="M16 0L54 6L60 30L22 60L0 44Z" fill="#f2568c" /><path d="M16 0L32 3L6 38L0 44Z" fill="#fbb955" /><path d="M0 44L22 30L30 60L12 50Z" fill="#e94fd8" />
    <path d="M4 62L24 50L40 90L10 110L16 82Z" fill="#fb6a50" /><path d="M4 62L20 52L24 78L16 80Z" fill="#fdb83a" /><path d="M10 110L24 80L50 92Z" fill="#ee4e9a" />
    <path d="M76 2L110 30L102 60L108 92L68 112L44 92L60 30Z" fill="#3f8cf4" /><path d="M76 2L110 30L92 42L64 24Z" fill="#56d2f2" /><path d="M44 92L108 92L68 112Z" fill="#4aa8f0" />
    <rect x="21" y="21" width="69" height="70" fill="#0c0a0c" />
    <text x="28" y="56" fontFamily="Liberation Mono" fontWeight="700" fontSize="34" fill="#fff">IJ</text>
    <rect x="29" y="77" width="26" height="5" fill="#fff" />
  </svg>
);

const MySQL = (
  <svg viewBox="0 0 118 120" className="h-[120px] w-[118px]" fill="none">
    <defs><linearGradient id="my" x1="0" x2="0" y1="0" y2="1"><stop offset="0" stopColor="#3f6e9c" /><stop offset="1" stopColor="#22405a" /></linearGradient></defs>
    <rect x="1" y="1" width="116" height="118" rx="14" fill="url(#my)" stroke="#3a7aa4" strokeWidth="2" />
    <path d="M57 87Q44 78 40 65Q39 78 35 78Q29 74 29 64Q29 54 32 49Q27 42 24 34Q19 24 16 18Q17 14 24 16Q29 18 33 22Q43 21 51 27Q64 36 72 52Q77 62 81 70Q94 74 98 78Q102 82 104 85Q96 84 87 87Q92 92 96 94Q102 98 108 103" stroke="#f2f8fc" strokeWidth="2.800" strokeLinejoin="round" />
    <path d="M34 30Q38 30 38 35Z" fill="#fff" stroke="#fff" />
    <path d="M90 8Q98 8 98 18L100 22L108 29Q112 36 106 37Q102 37 99 33L93 25Q84 24 82 16L87 19L92 16Z" fill="#f2f8fc" />
  </svg>
);

const Teams = (
  <svg viewBox="0 0 98 98" className="size-[98px]">
    <rect width="98" height="98" rx="23" fill="#fff" />
    <circle cx="50" cy="26" r="10" fill="#7b83eb" /><circle cx="72" cy="29" r="7.500" fill="#5059c9" />
    <path d="M68 40H84V60Q84 70 72 71Z" fill="#5059c9" /><path d="M34 40H69V64Q68 81 51 81Q36 81 34 64Z" fill="#7b83eb" />
    <rect x="12" y="30" width="37" height="37" rx="3" fill="#454eb8" /><path d="M22 40H39M30.500 40V59" stroke="#fff" strokeWidth="4" />
  </svg>
);

const Shutter = (
  <svg viewBox="0 0 98 98" className="size-[98px]">
    <rect width="98" height="98" rx="23" fill="#4f91cb" />
    <path d="M14 14H38L30 51L14 33ZM41 14H80L36 35ZM84 16V48L53 31ZM67 41L84 50V84H76ZM67 58L73 84H47ZM14 69H54L44 84H14ZM14 37L37 66H14Z" fill="#fff" />
  </svg>
);

const Settings = (
  <div className="relative">
    <svg viewBox="0 0 98 98" className="size-[98px]" fill="none">
      <defs><linearGradient id="se" x1="0" x2="0" y1="0" y2="1"><stop offset="0" stopColor="#d8e0e2" /><stop offset="1" stopColor="#8f8c88" /></linearGradient></defs>
      <rect width="98" height="98" rx="23" fill="url(#se)" />
      <circle cx="49" cy="49" r="42" fill="#2b2b2b" stroke="#aaa" strokeWidth="1" /><circle cx="49" cy="49" r="36.500" stroke="#9a9a9a" strokeWidth="4" strokeDasharray="2 1.820" />
      <circle cx="49" cy="49" r="32" stroke="#a3a3a3" strokeWidth="6" /><circle cx="49" cy="49" r="25" stroke="#777" strokeWidth="3" strokeDasharray="1.500 1.120" /><circle cx="49" cy="49" r="21" stroke="#8a8a86" strokeWidth="4" fill="#5c5c5a" />
      <path d="M49 49H79M49 49L34 23M49 49L34 75" stroke="#333" strokeWidth="6" /><path d="M49 49H79M49 49L34 23M49 49L34 75" stroke="#b4b8ba" strokeWidth="3.600" />
      <circle cx="49" cy="49" r="3.500" fill="#999" stroke="#333" strokeWidth="1.500" />
    </svg>
    <span className="absolute -top-[11px] left-[68px] flex size-[46px] items-center justify-center rounded-full bg-[#ec5245] font-['Inter'] text-[26px] text-white shadow-md">2</span>
  </div>
);

const CloudShield = (
  <svg viewBox="0 0 106 106" className="size-[106px]" fill="none" stroke="#fff" strokeWidth="3.400">
    <rect width="106" height="106" rx="14" fill="#d12a35" stroke="none" />
    <path d="M53 7Q62 18 88 18Q92 46 86 66Q76 90 53 100Q30 90 20 66Q14 46 18 18Q44 18 53 7Z" />
    <path d="M40 54Q30 52 31 43Q32 38 38 37Q38 28 50 28Q62 28 62 37Q74 38 75 46Q74 54 66 54ZM53 54V66M42 58H64M36 67H72" />
  </svg>
);

const DriveDoc = (
  <svg viewBox="0 0 78 112" className="h-28 w-[78px]">
    <defs><linearGradient id="dd" x1="0" x2="0" y1="0" y2="1"><stop offset="0" stopColor="#c8ced2" /><stop offset="1" stopColor="#848c90" /></linearGradient></defs>
    <path d="M10 0H46L72 30V60H10Z" fill="#ececec" /><path d="M0 8H44Q56 22 78 40V112H0Z" fill="#fff" /><path d="M44 4Q56 20 74 36Q52 36 50 32Z" fill="#ddd" />
    <rect x="15" y="45" width="48" height="50" rx="3" fill="url(#dd)" /><rect x="24" y="47" width="22" height="6" fill="#222" /><circle cx="39" cy="68" r="15" fill="#b4bcc0" stroke="#98a0a4" /><circle cx="39" cy="68" r="5" fill="#9aa2a6" />
    <rect x="17" y="87" width="44" height="8" fill="#8a9296" /><path d="M36 90.500H52" stroke="#222" strokeWidth="6" strokeDasharray="2 1" />
  </svg>
);

const TechSpot = (
  <div className="flex size-[122px] items-center justify-center rounded-[28px] bg-white font-['Lato'] text-[25.500px] text-[#3c3c40]"><b>Tech</b>Spot</div>
);

const Trash = (
  <svg viewBox="0 0 88 112" className="h-28 w-[88px]">
    <defs><linearGradient id="tr" x1="0" x2="1"><stop offset="0" stopColor="#dcdce2" /><stop offset="0.500" stopColor="#f1eff0" /><stop offset="1" stopColor="#c6c4d2" /></linearGradient></defs>
    <ellipse cx="44" cy="14" rx="43" ry="11" fill="#b4a6e0" />
    <path d="M8 18L14 4L24 6L30 0L40 8L54 1L62 10L74 6L80 18L44 30Z" fill="#e8e8e6" />
    <path d="M1 15Q44 34 87 15L76 100Q74 112 44 112Q14 112 12 100Z" fill="url(#tr)" />
    <path d="M18 12L30 8L36 17L24 22Z" fill="#7c8a86" /><path d="M50 9L64 8L62 22L52 20Z" fill="#4a4e58" /><path d="M30 12L40 10L38 20Z" fill="#43b4d8" /><path d="M62 14L70 9L72 20Z" fill="#a05a40" /><path d="M12 12L20 9L18 20Z" fill="#5a6660" /><path d="M40 14L48 10L46 22Z" fill="#8c8c88" />
    <path d="M30 36Q44 48 58 30M16 30L22 96" stroke="#fff" strokeWidth="3" opacity="0.600" fill="none" />
  </svg>
);

const APPS_A: [React.ReactNode, boolean][] = [
  [Finder, true],
  [Safari, false],
  [<Office letter="P" color="#c2482a" dark="#a03018"><circle cx="51" cy="49" r="33" fill="#d9673f" /><path d="M51 16A33 33 0 0 1 84 49H51Z" fill="#f2947a" /><path d="M18 49A33 33 0 0 0 84 49Z" fill="#c25338" /></Office>, true],
  [Chrome, true],
  [<Office letter="X" color="#337d45" dark="#1c5c2c"><path d="M26 16H54V33H26Z" fill="#4ca06a" /><path d="M54 16H82V33H54Z" fill="#64c388" /><path d="M26 33H54V49H26Z" fill="#337d45" /><path d="M54 33H82V49H54Z" fill="#4ca06a" /><path d="M26 49H54V65H26Z" fill="#285c38" /><path d="M54 49H82V65H54Z" fill="#3a7c4a" /><path d="M26 65H82V82H26Z" fill="#295a38" /></Office>, true],
  [<Office letter="O" color="#2f7fd6" dark="#1a5cb4"><path d="M28 16H78V24H28Z" fill="#2058a8" /><path d="M28 24H44V41H28Z" fill="#2a6cc0" /><path d="M44 24H61V41H44Z" fill="#3c98e0" /><path d="M61 24H78V41H61Z" fill="#74d6fa" /><path d="M44 41H61V57H44Z" fill="#2f74c8" /><path d="M61 41H78V57H61Z" fill="#4aa8ec" /><path d="M26 57H80V82H26Z" fill="#5cb4ec" /><path d="M80 57V82L40 64Z" fill="#3f8cd4" /><path d="M42 56H66L54 66Z" fill="#2458a0" /></Office>, true],
  [<Office letter="W" color="#2a5cc0" dark="#1a3f94"><path d="M26 16H82V33H26Z" fill="#5ba3ea" /><path d="M26 33H82V49H26Z" fill="#3f7dd0" /><path d="M26 49H82V65H26Z" fill="#2a5cb8" /><path d="M26 65H82V82H26Z" fill="#1c3f8c" /></Office>, true],
];

const APPS_B: React.ReactNode[] = [
  Docker,
  Rocket,
  Terminal,
  <Office letter="N" color="#70289e" dark="#541c84"><path d="M26 16H80V82H26Z" fill="#bc6ee2" /><path d="M65 34H80V50H65Z" fill="#a454d0" /><path d="M65 50H80V66H65Z" fill="#8c40b8" /><path d="M65 66H80V82H65Z" fill="#6e289c" /></Office>,
  EclipseIcon,
  Postman,
  VSCode,
  IntelliJ,
  MySQL,
  Teams,
  Shutter,
  Settings,
  CloudShield,
];

function DockSlot({ w, dot, children }: Kids & { w: string; dot?: boolean }) {
  return (
    <div className={`flex h-full shrink-0 flex-col items-center ${w}`}>
      <div className="flex h-[138px] items-center">{children}</div>
      {dot && <i className="size-2 rounded-full bg-[#1e0468]" />}
    </div>
  );
}

function Dock() {
  return (
    <nav className="absolute top-[1938px] left-[113px] flex h-[152px] w-[3134px] overflow-hidden rounded-[44px] border-2 border-white/25 bg-[linear-gradient(90deg,#7f65da_0%,#7664d0_20%,#7364e0_36%,#8861f6_45%,#8a62f8_58%,#ae6cf6_67%,#b26df7_83%,#a071f8_90%,#8c68f6_100%)] bg-origin-border pl-px">
      {APPS_A.map(([icon, dot], i) => (
        <DockSlot key={i} w="w-[130.700px]" dot={dot}>{icon}</DockSlot>
      ))}
      <div className="mr-[26px] ml-[31px] mt-[18px] h-28 w-0.5 shrink-0 bg-[#4a35b0]" />
      {APPS_B.map((icon, i) => (
        <DockSlot key={i} w="w-[130.600px]" dot>{icon}</DockSlot>
      ))}
      <div className="mr-[27px] ml-[31px] mt-[18px] h-28 w-0.5 shrink-0 bg-[#7a3fc4]" />
      <DockSlot w="w-[130px]">{DriveDoc}</DockSlot>
      <DockSlot w="w-[130px]">{TechSpot}</DockSlot>
      <DockSlot w="w-[130px]">{Trash}</DockSlot>
    </nav>
  );
}

export default function App() {
  return (
    <div className="relative isolate h-[2100px] w-[3360px] overflow-hidden bg-[#2f1b88]">
      <Wallpaper />
      <DesktopItems />
      <EclipseWindow />
      <div className="absolute top-[50px] left-[50px] h-[1824px] w-[3276px] rounded-[20px] shadow-[0_0_0_1px_rgba(0,0,0,0.3),0_24px_60px_rgba(0,0,0,0.55)]">
        <div className="flex h-full flex-col overflow-hidden rounded-[20px] bg-white font-['Inter']">
          <TabStrip />
          <Toolbar />
          <Bookmarks />
          <Page />
        </div>
      </div>
      <Dock />
      <MenuBar />
    </div>
  );
}
